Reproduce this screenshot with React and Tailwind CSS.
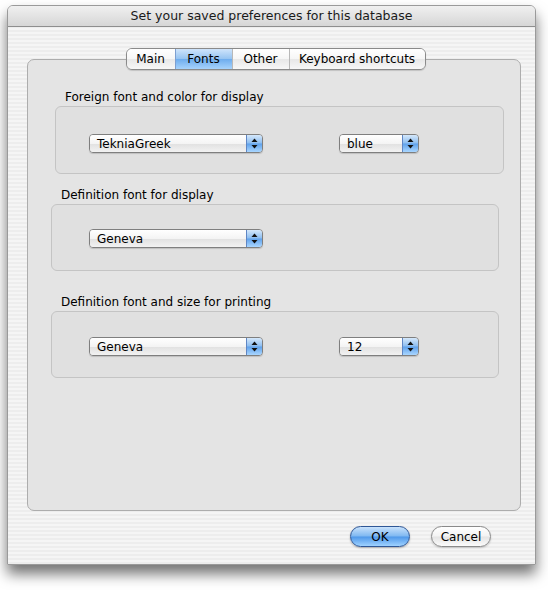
import React from "react";

const font = { fontFamily: '"DejaVu Sans", "Liberation Sans", sans-serif' };

function Arrows() {
  return (
    <svg width="7" height="11" viewBox="0 0 7 11">
      <path d="M3.5 0.5 L6.5 4 L0.5 4 Z" fill="#111" />
      <path d="M3.5 10.5 L6.5 7 L0.5 7 Z" fill="#111" />
    </svg>
  );
}

function Popup({ value, width }) {
  return (
    <div
      className={`${width} h-[19px] flex items-stretch rounded-[4px] border border-[#7f7f7f] overflow-hidden shadow-[0_1px_1px_rgba(0,0,0,0.15)]`}
    >
      <div className="flex-1 flex items-center pl-[7px] text-[12px] text-black bg-[linear-gradient(#ffffff,#f4f4f4_50%,#e2e2e2_55%,#f2f2f2)]">
        {value}
      </div>
      <div className="w-[16px] flex items-center justify-center border-l border-[#5f86c4] bg-[linear-gradient(#d5e8fb,#8cbdf0_48%,#5fa1eb_52%,#a9d6ff)]">
        <Arrows />
      </div>
    </div>
  );
}

function Group({ label, className, boxClass, children }) {
  return (
    <div className={className}>
      <div className="text-[12px] leading-[14px] text-black pl-[10px]">{label}</div>
      <div className={`mt-[2px] rounded-[6px] border border-[#c4c4c4] bg-[#e0e0e0] ${boxClass}`}>{children}</div>
    </div>
  );
}

export default function App() {
  const tabs = [
    { t: "Main", w: "w-[48px]" },
    { t: "Fonts", w: "w-[57px]" },
    { t: "Other", w: "w-[57px]" },
    { t: "Keyboard shortcuts", w: "w-[136px]" },
  ];
  return (
    <div className="w-[548px] h-[590px] bg-white pt-[5px] pl-[7px]" style={font}>
      <div className="w-[529px] h-[560px] flex flex-col rounded-t-[6px] border border-[#9a9a9a] shadow-[0_9px_14px_rgba(0,0,0,0.55)] bg-[repeating-linear-gradient(0deg,#ededed_0px,#ededed_2px,#f5f5f5_2px,#f5f5f5_4px)] overflow-hidden">
        <div className="h-[21px] shrink-0 flex items-center justify-center border-b border-[#8e8e8e] bg-[linear-gradient(#f0f0f0,#d6d6d6)] text-[12.5px] text-[#1a1a1a]">
          Set your saved preferences for this database
        </div>

        <div className="mt-[21px] pl-[8px] flex justify-center relative z-10">
          <div className="flex h-[22px] rounded-[6px] border border-[#8a8a8a] overflow-hidden text-[12px] shadow-[0_1px_1px_rgba(0,0,0,0.15)]">
            {tabs.map(({ t, w }, i) => (
              <div
                key={t}
                className={
                  t === "Fonts"
                    ? `${w} flex items-center justify-center border-l border-[#7d9fd0] bg-[linear-gradient(#cfe4fb,#95c3f1_50%,#6fadee_52%,#a7d3fc)] text-black`
                    : `${w} flex items-center justify-center bg-[linear-gradient(#ffffff,#f6f6f6_50%,#e8e8e8_52%,#f7f7f7)] text-black ${i > 0 ? "border-l border-[#b8b8b8]" : ""}`
                }
              >
                {t}
              </div>
            ))}
          </div>
        </div>

        <div className="ml-[19px] mt-[-11px] w-[494px] h-[452px] rounded-[7px] border border-[#adadad] bg-[#e4e4e4] pt-[30px]">
          <Group label="Foreign font and color for display" className="ml-[27px] w-[449px]" boxClass="h-[68px] pt-[27px] pl-[33px] flex gap-[76px]">
            <Popup value="TekniaGreek" width="w-[174px]" />
            <Popup value="blue" width="w-[80px]" />
          </Group>
          <Group label="Definition font for display" className="ml-[23px] mt-[14px] w-[448px]" boxClass="h-[67px] pt-[24px] pl-[37px] flex">
            <Popup value="Geneva" width="w-[174px]" />
          </Group>
          <Group label="Definition font and size for printing" className="ml-[23px] mt-[24px] w-[448px]" boxClass="h-[67px] pt-[25px] pl-[37px] flex gap-[76px]">
            <Popup value="Geneva" width="w-[174px]" />
            <Popup value="12" width="w-[80px]" />
          </Group>
        </div>

        <div className="mt-[15px] flex justify-end gap-[21px] pr-[44px]">
          <button className="w-[60px] h-[21px] rounded-full border border-[#2f5796] text-[12px] text-black bg-[linear-gradient(#c9e2fc,#7fb8f1_48%,#4f98ea_52%,#9fd2ff)] shadow-[0_1px_2px_rgba(0,0,0,0.3)]">
            OK
          </button>
          <button className="w-[60px] h-[21px] rounded-full border border-[#8a8a8a] text-[12px] text-black bg-[linear-gradient(#ffffff,#f3f3f3_48%,#e4e4e4_52%,#fbfbfb)] shadow-[0_1px_2px_rgba(0,0,0,0.2)]">
            Cancel
          </button>
        </div>
      </div>
    </div>
  );
}
